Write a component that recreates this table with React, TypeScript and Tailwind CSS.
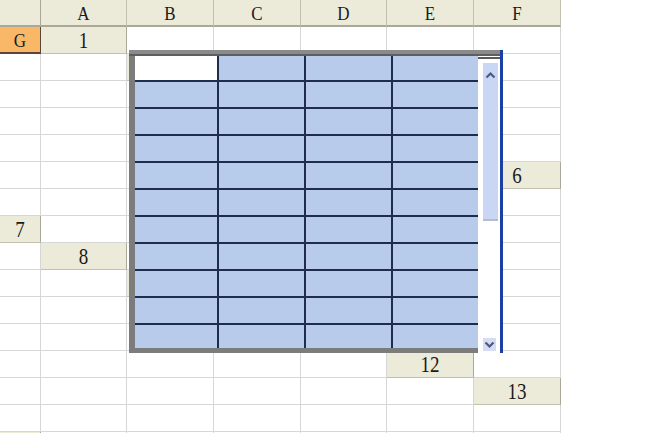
const COLS = ['A', 'B', 'C', 'D', 'E', 'F', 'G'];
const ROWS = Array.from({ length: 15 }, (_, i) => i + 1);
const ACTIVE_COL = 'G';
const ACTIVE_ROW = 5;

const TABLE_ROWS = 11;
const TABLE_COLS = 4;

function Chevron({ up }: { up?: boolean }) {
  return (
    <svg width="11" height="8" viewBox="0 0 11 8">
      <path
        d={up ? 'M1.5 6.5 L5.5 2.5 L9.5 6.5' : 'M1.5 1.5 L5.5 5.5 L9.5 1.5'}
        fill="none"
        stroke="#4b5a82"
        strokeWidth="2.2"
      />
    </svg>
  );
}

function ListBox() {
  return (
    <div className="absolute left-[129px] top-[50px] flex h-[303px]">
      <div className="flex w-[371px] flex-col">
        <div className="h-[6px] border-b-2 border-[#5e5e5e] bg-[#8a8a8a]" />
        <div className="flex flex-1">
          <div className="border-b-[5px] border-l-[6px] border-[#7c7c7c]">
            <div className="grid grid-cols-[82px_85px_85px_85px] grid-rows-[24px_repeat(9,25px)_23px] gap-[2px] bg-[#1f2c4c]">
              {Array.from({ length: TABLE_ROWS * TABLE_COLS }, (_, i) => (
                <div key={i} className={i === 0 ? 'bg-white' : 'bg-[#b8cbea]'} />
              ))}
            </div>
          </div>
          <div className="flex w-[22px] flex-col bg-white">
            <div className="mt-[1px] h-[2px] bg-[#5a5a5a]" />
            <div className="ml-[5px] mt-[4px] flex h-[158px] w-[15px] flex-col border-b-2 border-[#b9bcc6] bg-[#c9d7f5]">
              <div className="flex h-[24px] items-center justify-center">
                <Chevron up />
              </div>
            </div>
            <div className="flex-1" />
            <div className="mb-[2px] ml-[5px] flex h-[13px] w-[13px] items-center justify-center bg-[#d6dcf2]">
              <Chevron />
            </div>
          </div>
        </div>
      </div>
      <div className="w-[3px] bg-[#1c3fa6]" />
    </div>
  );
}

export default function App() {
  return (
    <div
      className="relative h-[433px] w-[650px] overflow-hidden bg-white text-[#1a1a1a]"
      style={{ fontFamily: '"Liberation Serif", "DejaVu Serif", serif' }}
    >
      <div className="grid grid-cols-[41px_86px_87px_87px_86px_87px_87px] grid-rows-[repeat(16,27px)]">
        {/* corner */}
        <div className="border-b-2 border-r border-[#aca899] bg-[#ecead9]" />
        {COLS.map(c => (
          <div
            key={c}
            className={`flex items-end justify-center border-b-2 border-r pb-[3px] text-[17px] leading-none ${
              c === ACTIVE_COL
                ? 'border-[#5b4534] bg-[#f8b868]'
                : 'border-[#c4c0ae] border-b-[#aca899] bg-[#ecead9]'
            }`}
          >
            <span className="inline-block scale-y-110">{c}</span>
          </div>
        ))}

        {ROWS.map(r => (
          <Row key={r} n={r} />
        ))}
      </div>
      <ListBox />
    </div>
  );
}

function Row({ n }: { n: number }) {
  const active = n === ACTIVE_ROW;
  return (
    <>
      <div
        className={`flex items-end justify-center border-b border-r pb-[3px] text-[19px] leading-none ${
          active ? 'border-b-2 border-[#5b4534] bg-[#f8b868]' : 'border-[#c4c0ae] border-r-[#aca899] bg-[#ecead9]'
        }`}
      >
        <span className="inline-block scale-y-[1.2]">{n}</span>
      </div>
      {COLS.map(c => (
        <div key={c} className="border-b border-r border-[#d6d6d6]" />
      ))}
    </>
  );
}
